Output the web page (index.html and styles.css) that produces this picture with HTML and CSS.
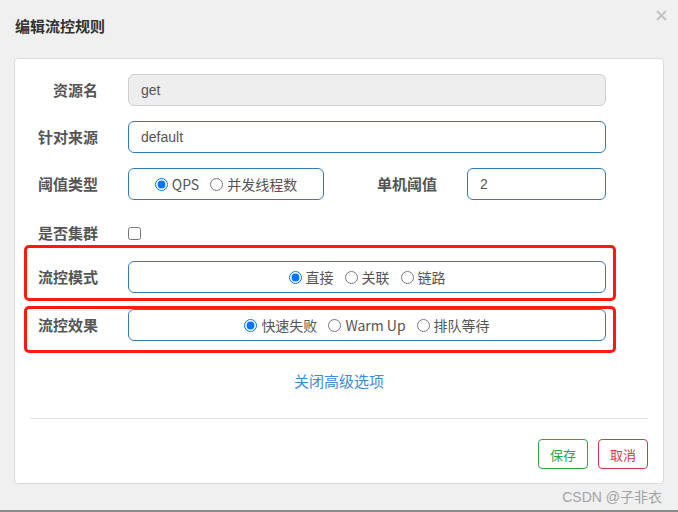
FILE: index.html
```html
<!DOCTYPE html>
<html lang="zh">
<head>
<meta charset="utf-8">
<title>编辑流控规则</title>
<link rel="stylesheet" href="styles.css">
</head>
<body>
<div class="page">
  <div class="header">
    <h4 class="title">编辑流控规则</h4>
    <span class="close"><svg width="11" height="11" viewBox="0 0 11 11"><path d="M1 1 L10 10 M10 1 L1 10" stroke="#c4c4c4" stroke-width="2.2" fill="none"/></svg></span>
  </div>
  <div class="panel">
    <div class="row">
      <span class="lbl">资源名</span>
      <div class="field disabled">get</div>
    </div>
    <div class="row">
      <span class="lbl">针对来源</span>
      <div class="field">default</div>
    </div>
    <div class="row">
      <span class="lbl">阈值类型</span>
      <div class="split">
        <div class="field radios small">
          <label class="opt"><input type="radio" name="grade" checked><span>QPS</span></label>
          <label class="opt"><input type="radio" name="grade"><span>并发线程数</span></label>
        </div>
        <span class="lbl mid">单机阈值</span>
        <div class="field count">2</div>
      </div>
    </div>
    <div class="row check-row">
      <span class="lbl">是否集群</span>
      <input class="cb" type="checkbox">
    </div>
    <div class="mark first">
      <div class="row inner">
        <span class="lbl">流控模式</span>
        <div class="field radios">
          <label class="opt"><input type="radio" name="strategy" checked><span>直接</span></label>
          <label class="opt"><input type="radio" name="strategy"><span>关联</span></label>
          <label class="opt"><input type="radio" name="strategy"><span>链路</span></label>
        </div>
      </div>
    </div>
    <div class="mark second">
      <div class="row inner">
        <span class="lbl">流控效果</span>
        <div class="field radios">
          <label class="opt"><input type="radio" name="behavior" checked><span>快速失败</span></label>
          <label class="opt"><input type="radio" name="behavior"><span>Warm Up</span></label>
          <label class="opt"><input type="radio" name="behavior"><span>排队等待</span></label>
        </div>
      </div>
    </div>
    <div class="more"><a class="link">关闭高级选项</a></div>
    <div class="divider"></div>
    <div class="actions">
      <button class="btn save">保存</button>
      <button class="btn cancel">取消</button>
    </div>
  </div>
  <div class="watermark">CSDN @子非衣</div>
</div>
</body>
</html>
```

FILE: styles.css
```css
* { box-sizing: border-box; }
html, body { margin: 0; padding: 0; }
body {
  background: #f0f0f0;
  font-family: "Liberation Sans", "Noto Sans CJK SC", sans-serif;
  color: #555;
  width: 678px;
  height: 512px;
  overflow: hidden;
}
.page {
  height: 512px;
  padding: 0 14px;
  border-bottom: 2px solid #8a8a8a;
  display: flex;
  flex-direction: column;
}
.header {
  height: 58px;
  display: flex;
  align-items: flex-start;
  padding: 16px 0 0 1px;
}
.title {
  margin: 0;
  font-family: "Noto Sans CJK SC", sans-serif;
  font-size: 15px;
  line-height: 20px;
  font-weight: 700;
  color: #333;
}
.close {
  margin-left: auto;
  margin-top: -6px;
  margin-right: -3px;
  display: flex;
}
.panel {
  width: 650px;
  height: 426px;
  background: #fff;
  border: 1px solid #dcdcdc;
  border-radius: 4px;
  padding: 15px 15px 14px 15px;
  display: flex;
  flex-direction: column;
}
.row {
  display: flex;
  align-items: center;
  height: 32px;
  margin-bottom: 15px;
}
.lbl {
  width: 68px;
  flex: none;
  margin-right: 30px;
  text-align: right;
  font-family: "Noto Sans CJK SC", sans-serif;
  font-size: 15px;
  font-weight: 700;
  color: #555;
  line-height: 20px;
}
.field {
  width: 478px;
  height: 32px;
  border: 1px solid #3579b8;
  border-radius: 6px;
  padding: 0 12px;
  font-size: 14px;
  line-height: 30px;
  color: #555;
}
.field.disabled {
  background: #eeeeee;
  border-color: #cfcfcf;
}
.split {
  display: flex;
  align-items: center;
  width: 478px;
}
.field.small { width: 196px; }
.lbl.mid {
  width: auto;
  flex: 1;
}
.field.count { width: 139px; }
.radios {
  display: flex;
  justify-content: center;
  align-items: center;
  gap: 11px;
  padding: 0;
}
.opt {
  display: flex;
  align-items: center;
  font-family: "Noto Sans CJK SC", sans-serif;
  font-size: 14px;
  color: #555;
  line-height: 20px;
}
.opt input {
  width: 13px;
  height: 13px;
  margin: 0 4px 0 0;
}
.check-row {
  height: 24px;
  margin-top: 6px;
  margin-bottom: 0;
}
.cb {
  width: 13px;
  height: 13px;
  margin: 0;
}
.mark {
  width: 592px;
  margin-left: -6px;
  border: 3px solid #ff1a0f;
  border-radius: 5px;
}
.mark .inner {
  padding-left: 3px;
  margin-bottom: 0;
}
.mark.first {
  height: 56px;
  padding-top: 13px;
}
.mark.second {
  height: 47px;
  margin-top: 5px;
}
.more {
  margin-top: 18px;
  height: 20px;
  text-align: center;
}
.link {
  font-family: "Noto Sans CJK SC", sans-serif;
  font-size: 15px;
  line-height: 20px;
  color: #3d8bd4;
}
.divider {
  margin-top: 27px;
  height: 1px;
  background: #e3e3e3;
}
.actions {
  margin-top: auto;
  display: flex;
  justify-content: flex-end;
  gap: 10px;
}
.btn {
  width: 50px;
  height: 30px;
  background: #fff;
  border-radius: 4px;
  font-family: "Noto Sans CJK SC", sans-serif;
  font-size: 13px;
  padding: 0;
}
.btn.save { border: 1px solid #28a745; color: #28a745; }
.btn.cancel { border: 1px solid #dc3545; color: #dc3545; }
.watermark {
  margin-top: 3px;
  text-align: right;
  padding-right: 2px;
  font-family: "Liberation Sans", "Noto Sans CJK SC", sans-serif;
  font-size: 14px;
  line-height: 20px;
  color: #a3a3a3;
}
```
